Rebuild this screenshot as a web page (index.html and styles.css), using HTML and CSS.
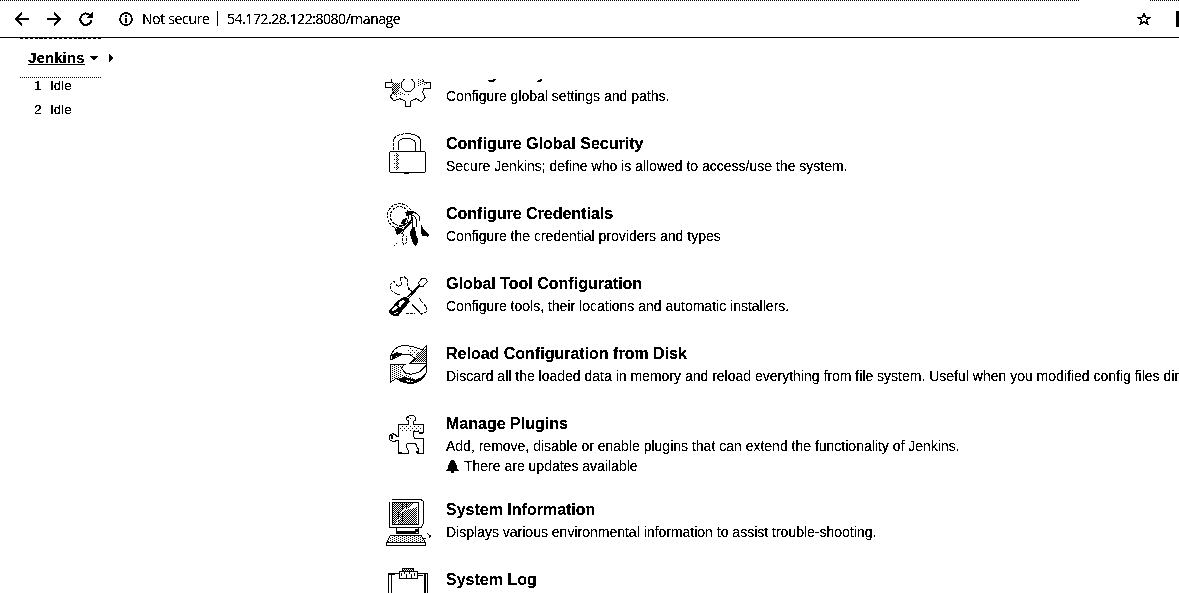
FILE: index.html
```
<!DOCTYPE html>
<html lang="en">
<head>
<meta charset="utf-8">
<title>Manage Jenkins</title>
<link rel="stylesheet" href="styles.css">
</head>
<body>
<svg class="defs" width="0" height="0" aria-hidden="true">
  <defs>
    <filter id="mono" color-interpolation-filters="sRGB" x="0" y="0" width="100%" height="100%"><feComponentTransfer><feFuncR type="discrete" tableValues="0 0 0 0 0 1 1 1"/><feFuncG type="discrete" tableValues="0 0 0 0 0 1 1 1"/><feFuncB type="discrete" tableValues="0 0 0 0 0 1 1 1"/></feComponentTransfer></filter>
    <pattern id="half" width="6" height="6" patternUnits="userSpaceOnUse"><path class="fill" d="M0 0h3v3H0zM3 3h3v3H3z"/></pattern>
    <pattern id="dots" width="12" height="6" patternUnits="userSpaceOnUse"><path class="fill" d="M0 0h3v3H0zM6 3h3v3H6z"/></pattern>
    <pattern id="sparse" width="12" height="12" patternUnits="userSpaceOnUse"><path class="fill" d="M0 0h3v3H0zM6 6h3v3H6z"/></pattern>
  </defs>
</svg>
<div class="screen">
  <header class="toolbar">
    <svg class="nav" viewBox="0 0 140 37"><path class="arrow" d="M29 19H16M22 13l-6 6 6 6M47 19h13M54 13l6 6-6 6M91 16.500a5.700 5.700 0 1 0 .5 4"/><path class="fill" d="M93 12v6h-6z"/><circle class="ring" cx="126" cy="19" r="6"/><path class="fill" d="M125 15h2v2h-2zM125 18h2v5h-2z"/></svg>
    <span class="secure">Not secure</span><i class="divider"></i><span class="url">54.172.28.122:8080/manage</span>
    <svg class="star" viewBox="0 0 14 14"><path class="ring" d="M7 1.500l1.600 4h4L9.500 8l1.200 4L7 9.800 3.300 12l1.200-4L1.400 5.500h4z"/></svg>
    <i class="edge"></i>
  </header>
  <nav class="crumbs"><span class="crumb"><a class="home">Jenkins</a><i class="down"></i></span><i class="right"></i></nav>
  <main class="page">
    <aside class="executors"><div class="row"><b>1</b>Idle</div><div class="row"><b>2</b>Idle</div></aside>
    <section class="list">
      <article class="item">
        <svg class="icon" viewBox="0 -45 180 180"><path class="shade" fill="url(#half)" d="M36 39h24v12l-6 15-12 12-3-15z"/><path class="shade" fill="url(#dots)" d="M48 66h12l15 6h21v3H54l-9 9zM108 24h15l18 18-6 9-9-9-9 12z"/><circle class="line" cx="84" cy="45" r="20"/><path class="line" d="M33 27l3 10-19 1v15h19l4 13-9 14 11 13 17-7 17 7v16h16V93l17-7 15 9 12-13-8-14 3-13h21V38h-19l-6-11"/></svg>
        <div class="copy"><h2 class="title">Configure System</h2><p class="desc">Configure global settings and paths.</p></div>
      </article>
      <article class="item">
        <svg class="icon" viewBox="0 0 180 180"><path class="line dash" d="M40 76V52q0-25 40-26"/><path class="line" d="M80 26q40 0 42 24v27M55 76V50q4-10 25-10t26 12v25"/><rect class="line" x="29" y="79" width="107" height="63" rx="5"/><path class="shade" fill="url(#half)" d="M48 84h6v51h-6z"/><path class="shade" fill="url(#sparse)" d="M42 84h15v51H42z"/><path class="line heavy" d="M33 79h73M72 144h15"/></svg>
        <div class="copy"><h2 class="title">Configure Global Security</h2><p class="desc">Secure Jenkins; define who is allowed to access/use the system.</p></div>
      </article>
      <article class="item">
        <svg class="icon" viewBox="0 0 180 180"><circle class="line dash" cx="59" cy="63" r="37"/><circle class="line dash" cx="59" cy="63" r="28"/><path class="line" d="M77 52q18-8 35 5 10 10 7 20M79 60q24-4 30 13v24M45 100l20-7 25-14 8-11v12L77 97 65 117M97 75v20"/><path class="line dash" d="M70 118l-4 20 6 12 8-7V123"/><path class="fill" d="M76 52l12-4 18 6-14 3-12 6zM67 75l12-6 3 3-10 15h-9zM45 103l15-4 12 3-12 15-10 3zM88 114l9-18h8l3 24 8 18-8 16-9-8zM123 89l9 15 15 15-3 6-16-2-6-12z"/><path class="shade" fill="url(#half)" d="M72 90l24-12v9l-18 15z"/><path class="shade" fill="url(#sparse)" d="M42 144h12v9H42z"/></svg>
        <div class="copy"><h2 class="title">Configure Credentials</h2><p class="desc">Configure the credential providers and types</p></div>
      </article>
      <article class="item">
        <svg class="icon" viewBox="0 -9 180 180"><path class="line dash" d="M61 30l12-3 10 10v20l14 14M117 90l22 28v14l-14 6-29-29M61 30l4 18-11 9-12-17-12 11 5 18 15 9h14"/><path class="line" d="M82 87l36-35-2-9 11-13 10 2 5 9-13 14-12 2-33 36M86 63l14 13M98 111l17 18"/><path class="line dash" d="M78 138l9-3 6 3 12-3"/><path class="fill" d="M27 129l24-29 21-14 14 4 3 12-17 19-16 22H39l-11-7z"/><path class="blank" d="M34 126l14-13 6 6-15 12zM59 102l10-6 6 3-14 18-6-3zM42 137l9-6 3 5z"/></svg>
        <div class="copy"><h2 class="title">Global Tool Configuration</h2><p class="desc">Configure tools, their locations and automatic installers.</p></div>
      </article>
      <article class="item">
        <svg class="icon" viewBox="0 -9 180 180"><path class="line" d="M31 65q1-27 25-39 24-8 56 4l14 5 14-13v54H90l15-15-17-13H67L33 66z"/><path class="fill" d="M34 49l16-6 17 3-5 6-12 3-14 10zM54 123l17-6 37 8 15-7 15-14-7 15-23 15-25 3-24-6z"/><path class="blank" d="M78 126l24 3-9 3-12-1z"/><path class="shade" fill="url(#half)" d="M105 48l33-18v42H96l15-12z"/><path class="shade" fill="url(#sparse)" d="M81 27l27 6 6 15-27 3z"/><path class="line" d="M31 133V78h43L64 91l13 15 17 3 26-8 20-21v20q-8 25-30 33-30 10-61-12z"/><path class="line" d="M92 76h48M31 78h46"/><path class="shade" fill="url(#dots)" d="M33 81h33l-6 12 9 18-12 9-24 10zM63 108l45 12-6 12-36-3z"/></svg>
        <div class="copy"><h2 class="title">Reload Configuration from Disk</h2><p class="desc">Discard all the loaded data in memory and reload everything from file system. Useful when you modified config files directly on disk.</p></div>
      </article>
      <article class="item updates">
        <svg class="icon" viewBox="0 -9 180 180"><path class="line" d="M55 49h31V39l-6-3 1-9 9-5h10l7 6v8l-8 4v9h32v24h-12l-8-4-12 2v13l6 8h26v45h-18v-6l4-6-7-9-3-10H82l-4 9 7 12v10H55V98h-7l-6 4-13-7V83l9-6 8 3 4 5h5z"/><path class="shade" fill="url(#sparse)" d="M60 54h63v18H60zM84 27h18v9H84z"/><path class="fill" d="M118 73h12v6h-12zM57 132h9v6h-9zM32 81h6v12h-6zM108 130h9v6h-9zM81 24h6v6h-6z"/></svg>
        <div class="copy"><h2 class="title">Manage Plugins</h2><p class="desc">Add, remove, disable or enable plugins that can extend the functionality of Jenkins.</p><p class="desc note"><svg class="bell" viewBox="0 0 12 13"><path class="fill" d="M5 0h2v1h1l2 4v3l2 2v1H8l-1 2H5l-1-2H0v-1l2-2V5l2-4h1z"/></svg><span class="avail">There are updates available</span></p></div>
      </article>
      <article class="item">
        <svg class="icon" viewBox="0 -6 180 180"><path class="line" d="M36 19h86l9 7v64l-7 13H28l-1-10V27"/><rect class="line" x="37" y="28" width="78" height="66"/><path class="shade" fill="url(#half)" d="M36 27h66l-15 15-21 9-6 18-15 24h-9zM69 54l42-12v51H51z"/><path class="shade" fill="url(#dots)" d="M45 57h30v30H45zM57 30h30v18H57z"/><path class="line" d="M48 106v15h67v-15M31 126h92l14 24v6H19v-5z"/><path class="fill" d="M51 114h57v6H51zM105 108h9v9h-9z"/><path class="shade" fill="url(#dots)" d="M33 129h90l9 18H24z"/><path class="line" d="M20 149h116M131 136h6M141 120l10 9-4 7"/></svg>
        <div class="copy"><h2 class="title">System Information</h2><p class="desc">Displays various environmental information to assist trouble-shooting.</p></div>
      </article>
      <article class="item">
        <svg class="icon" viewBox="0 204 180 180"><path class="line" d="M26 384V241h30M35 246v138M112 241h30v143M112 247h18"/><path class="fill" d="M131 240h6v144h-6zM27 240h18v6H27z"/><rect class="line" x="58" y="235" width="54" height="20"/><path class="line" d="M67 234v-7h33v7M64 241v9M73 235v9M79 244v12M88 235v9M94 244v12M103 241v9"/><path class="shade" fill="url(#half)" d="M66 225h36v9H66z"/></svg>
        <div class="copy"><h2 class="title">System Log</h2></div>
      </article>
    </section>
  </main>
</div>
</body>
</html>
```
FILE: styles.css
```
* { box-sizing: border-box; }
body { margin: 0; background: #fff; color: #000; overflow: hidden; font-family: "Liberation Sans", Arial, sans-serif; }
.defs { position: absolute; }
.screen { width: 1179px; height: 593px; overflow: hidden; display: flex; flex-direction: column; background: #fff; filter: url(#mono); }
.fill { fill: #000; }
.blank { fill: #fff; }
.line { fill: none; stroke: #000; stroke-width: 3; }
.heavy { stroke-width: 4; }
.dash { stroke-dasharray: 9 3; }
.ring { fill: none; stroke: #000; stroke-width: 1.4; }
.arrow { fill: none; stroke: #000; stroke-width: 1.8; }

.toolbar { height: 38px; flex: none; display: flex; align-items: center; border-bottom: 1px solid #000; font: 14px "Open Sans", "Noto Sans", sans-serif; white-space: nowrap;
  background: repeating-linear-gradient(90deg, #000 0 1px, #fff 1px 2px) 0 0 / 1080px 1px no-repeat, repeating-linear-gradient(90deg, #000 0 1px, #fff 1px 2px) 1150px 0 / 29px 1px no-repeat; }
.nav { width: 140px; height: 37px; flex: none; }
.secure { width: 67px; margin-left: 2px; letter-spacing: -.35px; }
.divider { width: 1px; height: 15px; margin: 0 9px 0 8px; background: #000; }
.url { letter-spacing: -.45px; }
.star { width: 14px; height: 14px; margin-left: auto; }
.edge { width: 3px; height: 16px; margin-left: 25px; background: #000; }

.crumbs { height: 41px; flex: none; display: flex; align-items: flex-start; padding-left: 20px; }
.crumb { width: 81px; height: 40px; display: flex; align-items: center; padding-left: 8px; border-top: 1px dashed #000; border-bottom: 1px dotted #000; }
.home { padding-bottom: 2px; font-size: 15.2px; font-weight: bold; text-decoration: underline; }
.down { margin-left: 5px; border: 4px solid transparent; border-top-color: #000; border-bottom: 0; }
.right { margin: 16px 0 0 8px; border: 4px solid transparent; border-left-color: #000; border-right: 0; }

.page { flex: 1; min-height: 0; overflow: hidden; display: flex; }
.executors { width: 380px; flex: none; padding: 0 0 0 34px; font-size: 13.5px; }
.row { height: 24px; line-height: 13px; display: flex; gap: 8px; }
.row b { font-weight: normal; width: 8px; }
.list { flex: none; width: 1100px; margin-top: -24px; }
.item { height: 70px; display: flex; gap: 6px; }
.updates { height: 86px; }
.icon { width: 60px; height: 60px; flex: none; shape-rendering: crispEdges; }
.copy { padding-top: 9px; white-space: nowrap; }
.title { margin: 0; font-size: 16px; line-height: 20px; }
.desc { margin: 2px 0 0; font-size: 14px; line-height: 20px; }
.note { margin: 0; display: flex; align-items: center; gap: 5px; }
.bell { width: 13px; height: 13px; }
```
